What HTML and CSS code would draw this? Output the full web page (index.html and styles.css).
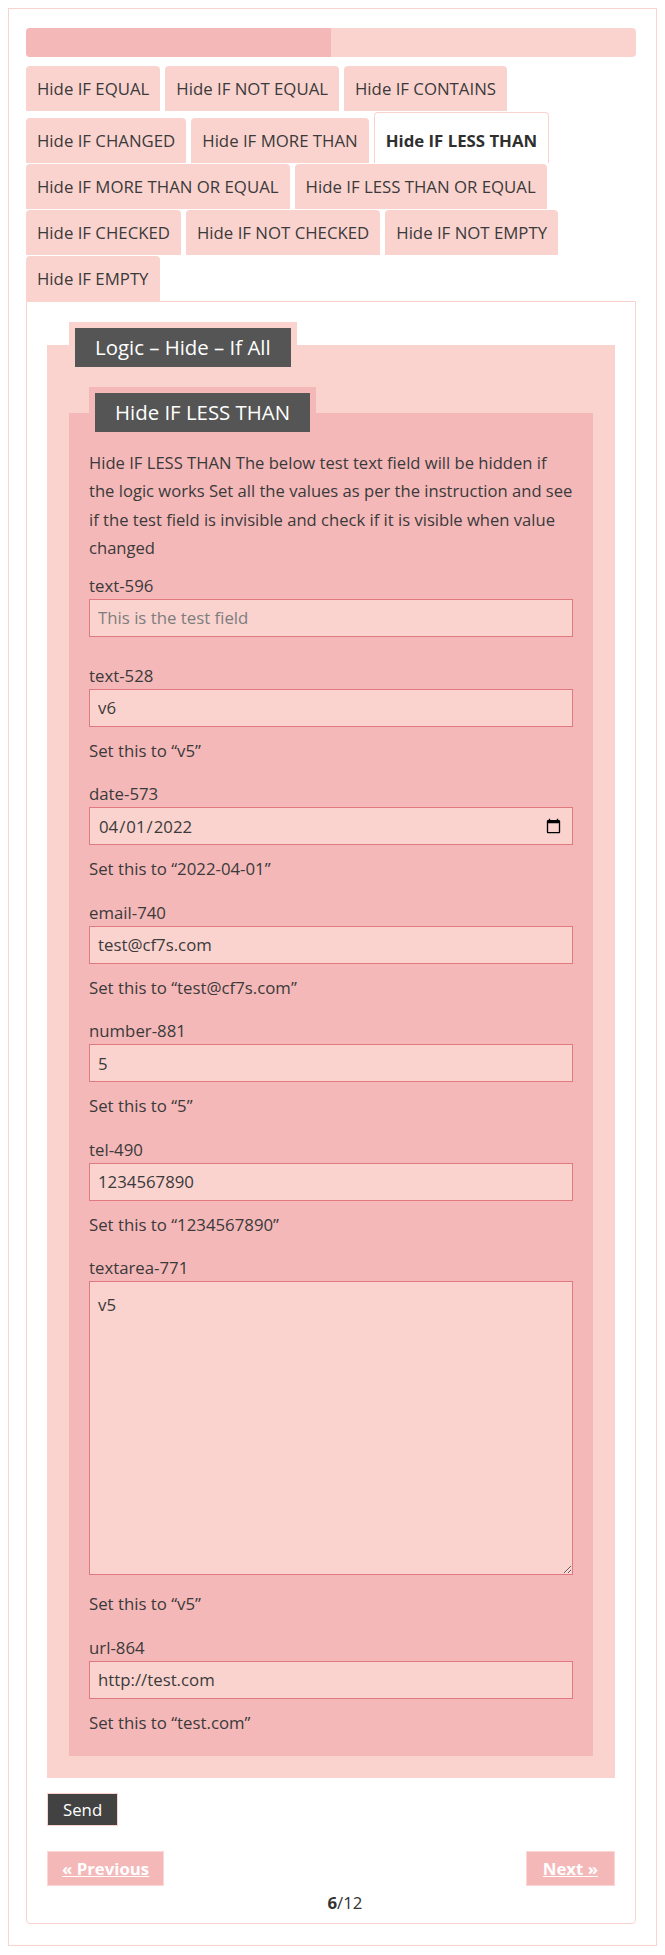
FILE: index.html
```html
<!DOCTYPE html>
<html lang="en">
<head>
<meta charset="utf-8">
<title>Logic – Hide – If All</title>
<link rel="stylesheet" href="styles.css">
</head>
<body>
<div class="page">
  <div class="progress"><div class="progress-fill" style="width:50%"></div></div>
  <ul class="tabs">
    <li class="tab">Hide IF EQUAL</li>
    <li class="tab">Hide IF NOT EQUAL</li>
    <li class="tab">Hide IF CONTAINS</li>
    <li class="tab">Hide IF CHANGED</li>
    <li class="tab">Hide IF MORE THAN</li>
    <li class="tab tab-active">Hide IF LESS THAN</li>
    <li class="tab">Hide IF MORE THAN OR EQUAL</li>
    <li class="tab">Hide IF LESS THAN OR EQUAL</li>
    <li class="tab">Hide IF CHECKED</li>
    <li class="tab">Hide IF NOT CHECKED</li>
    <li class="tab">Hide IF NOT EMPTY</li>
    <li class="tab">Hide IF EMPTY</li>
  </ul>
  <div class="panel">
    <fieldset class="group-outer">
      <legend class="legend-outer"><span class="legend-box">Logic – Hide – If All</span></legend>
      <fieldset class="group-inner">
        <legend class="legend-inner"><span class="legend-box">Hide IF LESS THAN</span></legend>
        <p class="desc">Hide IF LESS THAN The below test text field will be hidden if the logic works Set all the values as per the instruction and see if the test field is invisible and check if it is visible when value changed</p>
        <div class="field field-first">
          <label class="label" for="f596">text-596</label>
          <input class="input" id="f596" type="text" placeholder="This is the test field">
        </div>
        <div class="field">
          <label class="label" for="f528">text-528</label>
          <input class="input" id="f528" type="text" value="v6">
          <p class="hint">Set this to “v5”</p>
        </div>
        <div class="field">
          <label class="label" for="f573">date-573</label>
          <input class="input" id="f573" type="date" value="2022-04-01">
          <p class="hint">Set this to “2022-04-01”</p>
        </div>
        <div class="field">
          <label class="label" for="f740">email-740</label>
          <input class="input" id="f740" type="email" value="test@cf7s.com">
          <p class="hint">Set this to “test@cf7s.com”</p>
        </div>
        <div class="field">
          <label class="label" for="f881">number-881</label>
          <input class="input" id="f881" type="text" value="5">
          <p class="hint">Set this to “5”</p>
        </div>
        <div class="field">
          <label class="label" for="f490">tel-490</label>
          <input class="input" id="f490" type="tel" value="1234567890">
          <p class="hint">Set this to “1234567890”</p>
        </div>
        <div class="field">
          <label class="label" for="f771">textarea-771</label>
          <textarea class="textarea" id="f771">v5</textarea>
          <p class="hint hint-after-area">Set this to “v5”</p>
        </div>
        <div class="field field-last">
          <label class="label" for="f864">url-864</label>
          <input class="input" id="f864" type="url" value="http://test.com">
          <p class="hint">Set this to “test.com”</p>
        </div>
      </fieldset>
    </fieldset>
    <button class="send" type="button">Send</button>
    <div class="pager">
      <a class="pager-btn pager-prev" href="#">« Previous</a>
      <a class="pager-btn pager-next" href="#">Next »</a>
      <div class="pager-count"><b>6</b>/12</div>
    </div>
  </div>
</div>
</body>
</html>
```
FILE: styles.css
```css
* { box-sizing: border-box; }

body {
  margin: 8px;
  font-family: "Open Sans", "Noto Sans", sans-serif;
  font-size: 16.8px;
  color: #3a3a3a;
  background: #fff;
}

.page {
  border: 1px solid #fad3cf;
  padding: 19px 20px 21px 17px;
}

.progress {
  height: 29px;
  background: #fad3cf;
  border-radius: 4px;
  overflow: hidden;
  margin-bottom: 9px;
}

.progress-fill {
  height: 100%;
  background: #f5b8b9;
}

.tabs {
  list-style: none;
  margin: 0;
  padding: 0;
  display: flex;
  flex-wrap: wrap;
  align-items: flex-end;
  column-gap: 5px;
  row-gap: 1px;
}

.tab {
  height: 45px;
  line-height: 45px;
  padding: 0 11px;
  background: #fad3cf;
  border-radius: 4px 4px 0 0;
  white-space: nowrap;
  color: #3a3a3a;
}

.tab-active {
  height: 51px;
  padding: 5px 11px 0;
  background: #fff;
  border: 1px solid #fad3cf;
  border-bottom: 0;
  font-weight: 700;
  color: #2f2f2f;
  line-height: 45px;
}

.panel {
  border: 1px solid #fad3cf;
  border-radius: 0 0 4px 4px;
  padding: 20px 20px 8px;
}

.group-outer {
  margin: 0;
  border: 0;
  min-width: 0;
  padding: 20px 22px 22px;
  background: #fad3cf;
}

.group-inner {
  margin: 0;
  border: 0;
  min-width: 0;
  padding: 11px 20px 19px;
  background: #f5b8b9;
}

.legend-outer {
  padding: 6px 6px 0;
  background: #fad3cf;
}

.legend-inner {
  padding: 6px;
  background: #f5b8b9;
}

.legend-box {
  display: block;
  background: #555555;
  color: #fff;
  font-size: 20.4px;
  line-height: 27px;
  padding: 6px 20px;
}

.desc {
  margin: 0 0 10.5px;
  font-size: 16.6px;
  line-height: 28.3px;
}

.field {
  margin-bottom: 16.5px;
}

.field-first {
  margin-bottom: 26px;
}

.field-last {
  margin-bottom: 0;
}

.label {
  display: block;
  line-height: 26px;
}

.input {
  display: block;
  width: 100%;
  height: 38px;
  margin: 0;
  padding: 0 8px;
  border: 1px solid #e07a80;
  border-radius: 0;
  background: #fad3cf;
  font-family: inherit;
  font-size: 16.8px;
  color: #3a3a3a;
}

.input::placeholder {
  color: #7d7d7d;
}

.textarea {
  display: block;
  width: 100%;
  height: 294px;
  margin: 0;
  padding: 11px 8px;
  border: 1px solid #e07a80;
  border-radius: 0;
  background: #fad3cf;
  font-family: inherit;
  font-size: 16.8px;
  line-height: 24px;
  color: #3a3a3a;
  resize: vertical;
}

.hint {
  margin: 10px 0 0;
  line-height: 28px;
}

.hint-after-area {
  margin-top: 15px;
}

.send {
  display: block;
  margin: 15px 0 0;
  height: 33px;
  padding: 0 15px;
  border: 1px solid #fad3cf;
  background: #424242;
  color: #fff;
  font-family: inherit;
  font-size: 16.8px;
  line-height: 31px;
  cursor: pointer;
}

.pager {
  margin-top: 25px;
  display: grid;
  grid-template-columns: auto 1fr auto;
  row-gap: 5px;
}

.pager-btn {
  display: block;
  height: 35px;
  line-height: 33px;
  padding: 0 14px;
  border: 1px solid #fcd7d4;
  background: #f5b8b9;
  color: #fff;
  font-weight: 700;
  text-decoration: underline;
}

.pager-prev { grid-column: 1; grid-row: 1; }
.pager-next { grid-column: 3; grid-row: 1; padding: 0 16px; }

.pager-count {
  grid-column: 2;
  grid-row: 2;
  text-align: center;
  line-height: 24px;
  color: #333;
}
```
